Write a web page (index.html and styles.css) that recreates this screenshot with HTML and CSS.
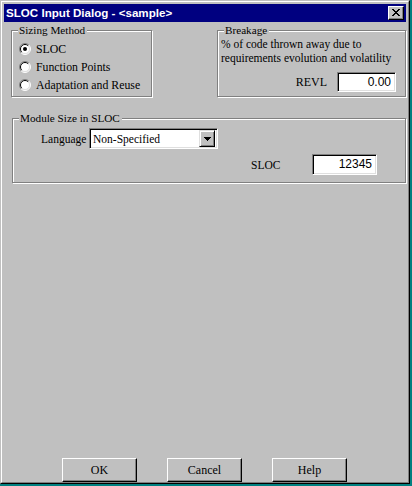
FILE: index.html
```html
<!DOCTYPE html>
<html>
<head>
<meta charset="utf-8">
<link rel="stylesheet" href="styles.css">
</head>
<body>
<div class="window">
  <div class="frame">
    <div class="titlebar">
      <span class="title">SLOC Input Dialog - &lt;sample&gt;</span>
      <div class="close">
        <svg width="8" height="7" viewBox="0 0 8 7"><path d="M0 0h2v1h-2zM6 0h2v1h-2zM1 1h2v1h-2zM5 1h2v1h-2zM2 2h4v1h-4zM3 3h2v1h-2zM2 4h4v1h-4zM1 5h2v1h-2zM5 5h2v1h-2zM0 6h2v1h-2zM6 6h2v1h-2z" fill="#000"/></svg>
      </div>
    </div>
    <div class="content">
      <div class="top-row">
        <div class="group sizing">
          <span class="legend">Sizing Method</span>
          <div class="radio-row">
            <svg class="radio" width="12" height="12" viewBox="0 0 12 12">
              <circle cx="6" cy="6" r="5" fill="#fff"/>
              <path d="M2.1 9.9A5.5 5.5 0 0 1 9.9 2.1" stroke="#808080" fill="none"/>
              <path d="M9.9 2.1A5.5 5.5 0 0 1 2.1 9.9" stroke="#fff" fill="none"/>
              <path d="M2.8 9.2A4.5 4.5 0 0 1 9.2 2.8" stroke="#000" fill="none"/>
              <path d="M9.2 2.8A4.5 4.5 0 0 1 2.8 9.2" stroke="#dfdfdf" fill="none"/>
              <circle cx="6" cy="6" r="2" fill="#000"/>
            </svg>
            <span>SLOC</span>
          </div>
          <div class="radio-row">
            <svg class="radio" width="12" height="12" viewBox="0 0 12 12">
              <circle cx="6" cy="6" r="5" fill="#fff"/>
              <path d="M2.1 9.9A5.5 5.5 0 0 1 9.9 2.1" stroke="#808080" fill="none"/>
              <path d="M9.9 2.1A5.5 5.5 0 0 1 2.1 9.9" stroke="#fff" fill="none"/>
              <path d="M2.8 9.2A4.5 4.5 0 0 1 9.2 2.8" stroke="#000" fill="none"/>
              <path d="M9.2 2.8A4.5 4.5 0 0 1 2.8 9.2" stroke="#dfdfdf" fill="none"/>
            </svg>
            <span>Function Points</span>
          </div>
          <div class="radio-row">
            <svg class="radio" width="12" height="12" viewBox="0 0 12 12">
              <circle cx="6" cy="6" r="5" fill="#fff"/>
              <path d="M2.1 9.9A5.5 5.5 0 0 1 9.9 2.1" stroke="#808080" fill="none"/>
              <path d="M9.9 2.1A5.5 5.5 0 0 1 2.1 9.9" stroke="#fff" fill="none"/>
              <path d="M2.8 9.2A4.5 4.5 0 0 1 9.2 2.8" stroke="#000" fill="none"/>
              <path d="M9.2 2.8A4.5 4.5 0 0 1 2.8 9.2" stroke="#dfdfdf" fill="none"/>
            </svg>
            <span>Adaptation and Reuse</span>
          </div>
        </div>
        <div class="group breakage">
          <span class="legend">Breakage</span>
          <div class="desc">% of code thrown away due to<br>requirements evolution and volatility</div>
          <div class="field-row revl-row">
            <span>REVL</span>
            <div class="textbox revl">0.00</div>
          </div>
        </div>
      </div>
      <div class="group module">
        <span class="legend">Module Size in SLOC</span>
        <div class="lang-row">
          <span class="lang-label">Language</span>
          <div class="combo">
            <span class="combo-text">Non-Specified</span>
            <div class="combo-btn">
              <svg width="7" height="4" viewBox="0 0 7 4"><path d="M0 0h7v1h-7zM1 1h5v1h-5zM2 2h3v1h-3zM3 3h1v1h-1z" fill="#000"/></svg>
            </div>
          </div>
        </div>
        <div class="sloc-row">
          <span class="sloc-label">SLOC</span>
          <div class="textbox sloc">12345</div>
        </div>
      </div>
      <div class="spacer"></div>
      <div class="buttons">
        <div class="btn">OK</div>
        <div class="btn">Cancel</div>
        <div class="btn">Help</div>
      </div>
    </div>
  </div>
</div>
</body>
</html>
```

FILE: styles.css
```css
html, body {
  margin: 0;
  padding: 0;
  background: #008080;
}

body {
  width: 412px;
  height: 486px;
  overflow: hidden;
  font-family: "Liberation Serif", "Times New Roman", serif;
  font-size: 11.5px;
  color: #000;
}

.window {
  width: 410px;
  height: 484px;
  box-sizing: border-box;
  border: 1px solid;
  border-color: #c0c0c0 #000 #000 #c0c0c0;
  background: #c0c0c0;
}

.frame {
  height: 100%;
  box-sizing: border-box;
  border: 1px solid;
  border-color: #fff #808080 #808080 #fff;
  padding: 2px;
  display: flex;
  flex-direction: column;
}

.titlebar {
  height: 18px;
  background: #000080;
  display: flex;
  align-items: center;
  justify-content: space-between;
  padding: 0 2px 0 2px;
}

.title {
  color: #fff;
  font-family: "Liberation Sans", Arial, sans-serif;
  font-weight: bold;
  font-size: 11.6px;
  line-height: 18px;
}

.close {
  width: 16px;
  height: 14px;
  box-sizing: border-box;
  background: #c0c0c0;
  border: 1px solid;
  border-color: #fff #000 #000 #fff;
  box-shadow: inset -1px -1px 0 #808080;
  display: flex;
  align-items: center;
  justify-content: center;
  padding-right: 1px;
  padding-bottom: 1px;
}

.close svg {
  display: block;
}

.content {
  flex: 1;
  display: flex;
  flex-direction: column;
}

.top-row {
  display: flex;
  margin-top: 8px;
  padding-left: 7px;
  gap: 65px;
}

.group {
  position: relative;
  box-sizing: border-box;
  border: 1px solid #808080;
  box-shadow: inset 1px 1px 0 #fff, 1px 1px 0 #fff;
}

.legend {
  position: absolute;
  top: -8px;
  left: 6px;
  padding: 0 2px 0 1px;
  background: #c0c0c0;
  line-height: 14px;
  font-size: 11.2px;
}

.sizing {
  width: 141px;
  height: 67px;
  padding: 9px 0 0 7px;
}

.radio-row {
  height: 18px;
  display: flex;
  align-items: center;
  gap: 5px;
  font-size: 11.8px;
}

.radio {
  display: block;
  flex: none;
}

.breakage {
  width: 189px;
  height: 67px;
  padding: 6px 0 0 3px;
}

.desc {
  line-height: 14px;
  font-size: 11.5px;
}

.field-row {
  display: flex;
  align-items: center;
  justify-content: flex-end;
}

.revl-row {
  margin-top: 7px;
  margin-right: 9px;
  gap: 10px;
  font-size: 12px;
}

.textbox {
  box-sizing: border-box;
  height: 20px;
  background: #fff;
  border: 1px solid;
  border-color: #808080 #fff #fff #808080;
  box-shadow: inset 1px 1px 0 #000, inset -1px -1px 0 #dfdfdf;
  font-family: "Liberation Sans", Arial, sans-serif;
  font-size: 12px;
  text-align: right;
  padding: 0 4px 0 0;
  line-height: 18px;
}

.revl {
  width: 59px;
}

.module {
  margin: 21px 0 0 8px;
  height: 65px;
  padding: 9px 0 0 28px;
}

.lang-row {
  display: flex;
  align-items: center;
  font-size: 11.5px;
}

.lang-label {
  width: 48px;
  flex: none;
}

.combo {
  box-sizing: border-box;
  width: 129px;
  height: 21px;
  background: #fff;
  border: 1px solid;
  border-color: #808080 #fff #fff #808080;
  box-shadow: inset 1px 1px 0 #000, inset -1px -1px 0 #dfdfdf;
  padding: 2px 2px 2px 3px;
  display: flex;
  align-items: center;
  justify-content: space-between;
}

.combo-text {
  line-height: 16px;
}

.combo-btn {
  width: 16px;
  height: 17px;
  box-sizing: border-box;
  background: #c0c0c0;
  border: 1px solid;
  border-color: #dfdfdf #000 #000 #dfdfdf;
  box-shadow: inset 1px 1px 0 #fff, inset -1px -1px 0 #808080;
  display: flex;
  align-items: center;
  justify-content: center;
}

.combo-btn svg {
  display: block;
}

.sloc-row {
  display: flex;
  align-items: center;
  margin: 5px 0 0 210px;
  font-size: 11.5px;
}

.sloc-label {
  width: 61px;
  flex: none;
}

.sloc {
  width: 65px;
  height: 21px;
  line-height: 19px;
}

.spacer {
  flex: 1;
}

.buttons {
  display: flex;
  gap: 30px;
  padding-left: 58px;
  margin-bottom: -2px;
}

.btn {
  width: 75px;
  height: 24px;
  box-sizing: border-box;
  border: 1px solid;
  border-color: #fff #000 #000 #fff;
  box-shadow: inset -1px -1px 0 #808080;
  display: flex;
  align-items: center;
  justify-content: center;
  font-size: 12px;
}
```
